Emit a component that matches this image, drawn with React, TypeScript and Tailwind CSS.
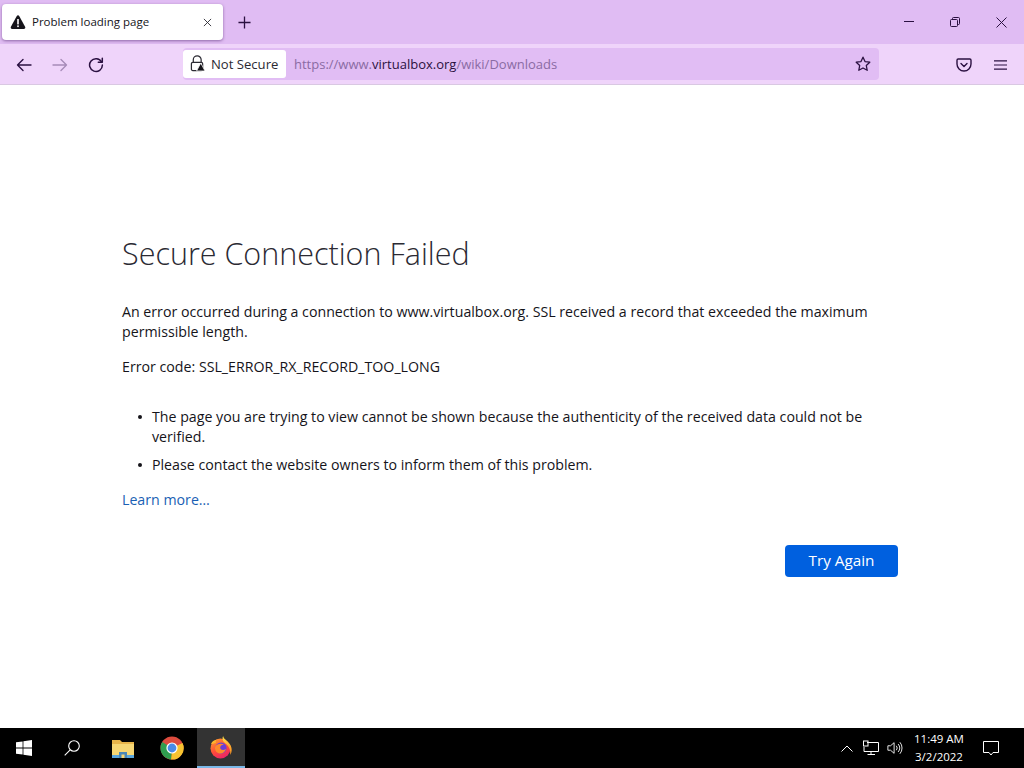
import React from "react";

const ink = "#2b1141";

function Chrome() {
  return (
    <svg viewBox="0 0 24 24" className="w-[24px] h-[24px]">
      <circle cx="12" cy="12" r="11.5" fill="#dd4b3e" />
      <path d="M12 12 L22.5 7 A11.5 11.5 0 0 1 11 23.5 Z" fill="#f7c331" />
      <path d="M12 12 L11 23.5 A11.5 11.5 0 0 1 2.2 6 Z" fill="#2f9e4f" />
      <circle cx="12" cy="12" r="5.6" fill="#fff" />
      <circle cx="12" cy="12" r="4.4" fill="#4a8be8" />
    </svg>
  );
}

function Firefox() {
  return (
    <svg viewBox="0 0 24 24" className="w-[24px] h-[24px]">
      <defs>
        <linearGradient id="ffbody" x1="0.2" y1="0" x2="0.7" y2="1">
          <stop offset="0" stopColor="#ff9a2e" />
          <stop offset="0.55" stopColor="#ff4a3a" />
          <stop offset="1" stopColor="#e8206e" />
        </linearGradient>
        <linearGradient id="ffflame" x1="0" y1="0" x2="0.5" y2="1">
          <stop offset="0" stopColor="#ffe14a" />
          <stop offset="1" stopColor="#ff9a26" />
        </linearGradient>
      </defs>
      <circle cx="11.500" cy="13.500" r="10" fill="url(#ffbody)" />
      <path d="M14.200 0.800 C14 3.500 17.500 5 20 8 C23 11.500 23.800 16.500 21 20 C22 15.500 20 11 16.500 8.500 C13.500 6.500 12.800 3.500 14.200 0.800 Z" fill="url(#ffflame)" />
      <path d="M2 9 C3 6.500 5 5 7.500 4.800 C6.500 6 6.500 7.200 7 8 C5 8.500 3.500 9 2 9 Z" fill="#ffb52e" />
      <circle cx="12" cy="13" r="5.600" fill="#6a3fd6" />
      <path d="M6.200 11.500 C8 8.800 12 8 15 9.500 C12.500 9.800 11 11 11.200 13 C11.500 15 14.500 15.600 17 14 C16 17.500 12.500 19.500 9 18 C6.500 17 5.400 14 6.200 11.500 Z" fill="#ff8a2b" />
    </svg>
  );
}

export default function App() {
  return (
    <div className="w-[1024px] h-[768px] flex flex-col bg-white overflow-hidden font-['Open_Sans','Noto_Sans',sans-serif]">
      {/* Title bar */}
      <div className="h-[44px] shrink-0 flex bg-[#e0bcf3]">
        <div className="ml-[2px] mt-[4px] w-[221px] h-[36px] flex items-center bg-white rounded-[4px] shadow-[0_1px_3px_rgba(60,20,90,0.5)]">
          <svg viewBox="0 0 16 16" className="ml-[8px] w-[16px] h-[16px]">
            <path d="M8 1.2c-.5 0-.9.3-1.2.8L.9 12.8c-.6 1.1.1 2.2 1.3 2.2h11.6c1.2 0 1.9-1.1 1.3-2.2L9.2 2C8.9 1.5 8.5 1.2 8 1.2Z" fill="#15141a" />
            <rect x="7.2" y="5" width="1.6" height="5.4" fill="#fff" />
            <rect x="7.2" y="11.4" width="1.6" height="1.7" fill="#fff" />
          </svg>
          <span className="ml-[6px] text-[11.5px] leading-none text-[#15141a] whitespace-nowrap">Problem loading page</span>
          <svg viewBox="0 0 10 10" className="ml-auto mr-[11px] w-[9px] h-[9px]" stroke="#2b2a33" strokeWidth="1" fill="none">
            <path d="M1 1l8 8M9 1l-8 8" />
          </svg>
        </div>
        <svg viewBox="0 0 14 14" className="ml-[15px] mt-[16px] w-[13px] h-[13px]" stroke={ink} strokeWidth="1.4" fill="none">
          <path d="M7 0.5v13M0.5 7h13" />
        </svg>
        <div className="ml-auto flex">
          <div className="w-[46px] h-[44px] flex items-center justify-center">
            <div className="w-[10px] h-px bg-[#2b1141] mt-[-2px]" />
          </div>
          <div className="w-[46px] h-[44px] flex items-center justify-center">
            <svg viewBox="0 0 10 10" className="w-[10px] h-[10px]" stroke={ink} strokeWidth="1" fill="none">
              <rect x="0.5" y="2.5" width="7" height="7" rx="1" />
              <path d="M2.5 2.5V1.5a1 1 0 0 1 1-1h5a1 1 0 0 1 1 1v5a1 1 0 0 1-1 1h-1" />
            </svg>
          </div>
          <div className="w-[46px] h-[44px] flex items-center justify-center">
            <svg viewBox="0 0 11 11" className="w-[11px] h-[11px]" stroke={ink} strokeWidth="1" fill="none">
              <path d="M0.5 0.5l10 10M10.5 0.5l-10 10" />
            </svg>
          </div>
        </div>
      </div>

      {/* Toolbar */}
      <div className="h-[41px] shrink-0 flex items-center pt-[1px] bg-[#efd4fa] border-b border-[#d9c8e2]">
        <svg viewBox="0 0 16 16" className="ml-[16px] w-[16px] h-[16px]" stroke={ink} strokeWidth="1.4" fill="none" strokeLinecap="round" strokeLinejoin="round">
          <path d="M15 8H1.5M7 2.5L1.5 8 7 13.5" />
        </svg>
        <svg viewBox="0 0 16 16" className="ml-[20px] w-[16px] h-[16px]" stroke="#a78bb8" strokeWidth="1.4" fill="none" strokeLinecap="round" strokeLinejoin="round">
          <path d="M1 8h13.5M9 2.5L14.5 8 9 13.5" />
        </svg>
        <svg viewBox="0 0 16 16" className="ml-[20px] w-[16px] h-[16px]" stroke={ink} strokeWidth="1.5" fill="none" strokeLinecap="round" strokeLinejoin="round">
          <path d="M13.5 4.8A6.4 6.4 0 1 0 14.4 8" />
          <path d="M14.3 1.3v4h-4" />
        </svg>
        <div className="ml-[79px] mb-[2px] w-[696px] h-[32px] flex items-center bg-[#e1bdf4] rounded-[4px]">
          <div className="w-[103px] h-[28px] flex items-center bg-white rounded-[3px]">
            <svg viewBox="0 0 16 18" className="ml-[7px] w-[15px] h-[17px]" fill="none">
              <path d="M3.5 8V5a4.2 4.2 0 0 1 8.4 0v3" stroke="#2b2a33" strokeWidth="1.3" />
              <rect x="1.5" y="7.8" width="12" height="8.7" rx="1.5" stroke="#2b2a33" strokeWidth="1.3" fill="#fff" />
              <path d="M11.5 8.5 L16 17 H7 Z" fill="#15141a" stroke="#fff" strokeWidth="0.8" />
            </svg>
            <span className="ml-[6px] mt-[2px] text-[13.1px] leading-none text-[#2b2a33] whitespace-nowrap">Not Secure</span>
          </div>
          <div className="ml-[8px] mt-[2px] text-[13px] leading-none text-[#8a6ba3] whitespace-nowrap">
            https://www.<span className="text-[#2b1141]">virtualbox.org</span>/wiki/Downloads
          </div>
          <svg viewBox="0 0 16 16" className="ml-auto mr-[8px] w-[16px] h-[16px]" stroke={ink} strokeWidth="1.3" fill="none" strokeLinejoin="round">
            <path d="M8 1.2l2 4.4 4.8.6-3.5 3.3.9 4.8L8 12l-4.2 2.3.9-4.8L1.2 6.2 6 5.6Z" />
          </svg>
        </div>
        <svg viewBox="0 0 16 16" className="ml-[77px] w-[16px] h-[16px]" stroke={ink} strokeWidth="1.4" fill="none" strokeLinecap="round" strokeLinejoin="round">
          <path d="M2.2 2h11.6c.7 0 1.2.5 1.2 1.2V7a7 7 0 0 1-14 0V3.2C1 2.500 1.500 2 2.200 2Z" />
          <path d="M5 6.500l3 3 3-3" />
        </svg>
        <svg viewBox="0 0 14 12" className="ml-[22px] w-[13px] h-[12px]" stroke={ink} strokeWidth="1.3" fill="none">
          <path d="M0 1.500h14M0 6h14M0 10.500h14" />
        </svg>
      </div>

      {/* Page */}
      <main className="flex-1 min-h-0 pt-[148px] pl-[122px] pr-[126px] text-[#15141a] text-[14.2px] leading-[20px]">
        <h1 className="text-[30.5px] leading-[40px] font-light text-[#2b2a33] whitespace-nowrap">Secure Connection Failed</h1>
        <p className="mt-[29px] w-[760px]">
          An error occurred during a connection to www.virtualbox.org. SSL received a record that exceeded the maximum permissible length.
        </p>
        <p className="mt-[15px]">Error code: SSL_ERROR_RX_RECORD_TOO_LONG</p>
        <ul className="mt-[30px] w-[760px]">
          <li className="flex">
            <span className="ml-[16px] mt-[8px] w-[4px] h-[4px] shrink-0 rounded-full bg-[#15141a]" />
            <span className="ml-[10px]">The page you are trying to view cannot be shown because the authenticity of the received data could not be verified.</span>
          </li>
          <li className="flex mt-[8px]">
            <span className="ml-[16px] mt-[8px] w-[4px] h-[4px] shrink-0 rounded-full bg-[#15141a]" />
            <span className="ml-[10px]">Please contact the website owners to inform them of this problem.</span>
          </li>
        </ul>
        <a className="block mt-[15px] text-[#1a5fb4]">Learn more…</a>
        <div className="flex justify-end mt-[35px]">
          <button className="w-[113px] h-[32px] bg-[#0060df] rounded-[4px] text-white text-[15.3px] font-medium leading-none">Try Again</button>
        </div>
      </main>

      {/* Taskbar */}
      <div className="h-[40px] shrink-0 flex items-center bg-black">
        <svg viewBox="0 0 16 16" className="ml-[16px] w-[16px] h-[16px]" fill="#fff">
          <path d="M0 2.300L6.600 1.400V7.600H0ZM7.400 1.300L16 0V7.600H7.400ZM0 8.400H6.600V14.600L0 13.700ZM7.400 8.400H16V16L7.400 14.800Z" />
        </svg>
        <svg viewBox="0 0 16 16" className="ml-[32px] w-[16px] h-[16px]" stroke="#fff" strokeWidth="1.1" fill="none">
          <circle cx="10" cy="6" r="5.300" />
          <path d="M6.200 9.800L0.700 15.300" />
        </svg>
        <svg viewBox="0 0 24 24" className="ml-[31px] w-[24px] h-[24px]">
          <path d="M1 4h8l2 2h12v3H1Z" fill="#e8b54a" />
          <rect x="1" y="8" width="22" height="14" fill="#f7d774" />
          <rect x="1" y="19" width="22" height="3" fill="#5aa6dc" />
          <rect x="8" y="16" width="8" height="6" fill="#4a87b8" />
          <rect x="10.500" y="18.500" width="3" height="3.500" fill="#f7d774" />
        </svg>
        <div className="ml-[25px]"><Chrome /></div>
        <div className="ml-[13px] w-[48px] h-[40px] flex items-center justify-center bg-[#333333] border-b-2 border-[#7ab8e8]">
          <Firefox />
        </div>
        <svg viewBox="0 0 12 7" className="ml-auto w-[12px] h-[7px]" stroke="#fff" strokeWidth="1" fill="none">
          <path d="M0.500 6.500L6 1l5.500 5.500" />
        </svg>
        <svg viewBox="0 0 16 16" className="ml-[10px] w-[16px] h-[16px]" stroke="#fff" strokeWidth="1" fill="none">
          <path d="M4 2.500H15.500V11.500H1V7" />
          <rect x="0.500" y="1" width="4.500" height="5" />
          <path d="M8 11.500V14.500M4.500 14.500H12" />
        </svg>
        <svg viewBox="0 0 18 16" className="ml-[8px] w-[16px] h-[16px]" stroke="#fff" strokeWidth="1" fill="none">
          <path d="M1 5.500H4L8 2V14L4 10.500H1Z" />
          <path d="M10.500 5.500a4 4 0 0 1 0 5M12.500 3.500a7 7 0 0 1 0 9M14.500 1.500a10 10 0 0 1 0 13" />
        </svg>
        <div className="ml-[7px] w-[58px] flex flex-col items-center text-white text-[11.5px] leading-[18px] whitespace-nowrap">
          <span>11:49 AM</span>
          <span>3/2/2022</span>
        </div>
        <svg viewBox="0 0 16 16" className="ml-[15px] mr-[25px] w-[16px] h-[16px]" stroke="#fff" strokeWidth="1" fill="none">
          <path d="M0.500 1.500H15.500V12.500H10L8 15L6 12.500H0.500Z" />
        </svg>
      </div>
    </div>
  );
}
